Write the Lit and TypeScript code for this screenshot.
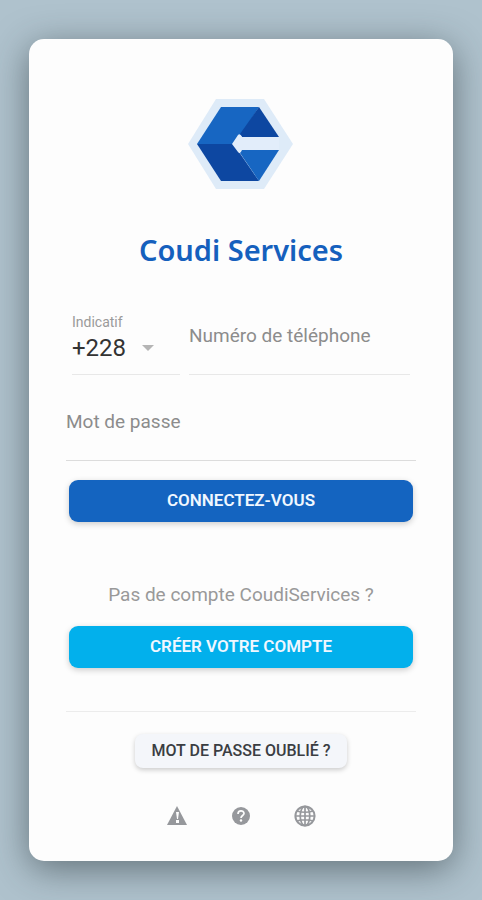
import { LitElement, html, css } from "lit";
import { customElement } from "lit/decorators.js";

@customElement("app-root")
export class AppRoot extends LitElement {
  static styles = css`
    :host {
      display: block;
      box-sizing: border-box;
      min-height: 100vh;
      padding: 39px 29px 38px;
      background: #afc2cd;
      font-family: Roboto, "Liberation Sans", sans-serif;
      overflow: hidden;
    }
    .card {
      display: flex;
      flex-direction: column;
      box-sizing: border-box;
      padding: 59px 37px 34px;
      border-radius: 15px;
      background: #fdfdfd;
      box-shadow: 0 8px 36px rgba(40, 50, 55, 0.56);
    }
    .logo {
      align-self: center;
      width: 106px;
      height: 92px;
    }
    h1 {
      margin: 42px 0 46px;
      font: 600 29px/36px "Noto Sans", "Open Sans", sans-serif;
      text-align: center;
      color: #1560bd;
    }
    form {
      display: flex;
      flex-direction: column;
    }
    input,
    select {
      display: block;
      box-sizing: border-box;
      width: 100%;
      margin: 0;
      border: 0;
      border-radius: 0;
      outline: 0;
      background: transparent;
      font-family: inherit;
      color: #333;
    }
    input {
      height: 24px;
      padding: 0;
      font-size: 19px;
      line-height: 24px;
    }
    input::placeholder {
      color: #8c8c8c;
      opacity: 1;
    }
    .row {
      display: flex;
      gap: 9px;
      margin: 0 6px;
    }
    .code {
      flex: 0 0 108px;
      box-sizing: border-box;
      border-bottom: 1px solid #e8e8e8;
    }
    .code label {
      display: block;
      font-size: 14px;
      line-height: 16px;
      color: #9a9a9a;
    }
    .pick {
      display: grid;
      grid-template-columns: 70px 12px;
      align-items: center;
      margin: 4px 0 12px;
    }
    .pick select {
      grid-area: 1 / 1 / 2 / 3;
      height: 28px;
      padding: 0;
      appearance: none;
      font-size: 24px;
      line-height: 28px;
    }
    .pick svg {
      grid-area: 1 / 2;
      width: 12px;
      height: 6px;
      pointer-events: none;
    }
    .phone {
      flex: 1;
      box-sizing: border-box;
      padding-top: 10px;
      border-bottom: 1px solid #e8e8e8;
    }
    .password {
      margin-top: 35px;
      padding-bottom: 26px;
      border-bottom: 1px solid #dcdcdc;
    }
    button {
      border: 0;
      font-family: inherit;
      cursor: pointer;
    }
    .wide {
      height: 42px;
      margin: 19px 3px 0;
      padding: 0 0 2px;
      border-radius: 9px;
      font-size: 17px;
      font-weight: 600;
      color: #f0f7ff;
      box-shadow: 0 2px 6px rgba(0, 0, 0, 0.2);
    }
    .login {
      background: #1464c0;
    }
    .create {
      background: #02b0ec;
    }
    p {
      margin: 61px 0 0;
      font-size: 19px;
      line-height: 24px;
      text-align: center;
      color: #999;
    }
    hr {
      width: 100%;
      height: 1px;
      margin: 43px 0 22px;
      border: 0;
      background: #ececec;
    }
    .forgot {
      align-self: center;
      height: 34px;
      padding: 0 16px 2px;
      border-radius: 8px;
      background: #f4f6fa;
      font-size: 16px;
      font-weight: 500;
      color: #3a3d42;
      box-shadow: 0 2px 5px rgba(0, 0, 0, 0.2);
    }
    nav {
      display: flex;
      justify-content: center;
      gap: 42px;
      margin-top: 37px;
    }
    nav a,
    nav svg {
      display: block;
      width: 22px;
      height: 22px;
    }
  `;

  render() {
    return html`
      <main class="card">
        <svg class="logo" viewBox="0 0 106 92" role="img" aria-label="Coudi Services">
          <path d="M0 46 28 1H76L105 46 76 91H28Z" fill="#deebf8" />
          <path d="M9 46 33 9H71L53 37 45 46Z" fill="#1766c2" />
          <path d="M71 9 91 39H54L52 36Z" fill="#0d47a1" />
          <path d="M9 46H45L51 54 71 83H33Z" fill="#0d47a1" />
          <path d="M52 52H91L71 83 52 55Z" fill="#1766c2" />
          <path d="M44 46 50 37Q52 35 54 39H91V52H54Q52 57 50 54Z" fill="#e2edfa" />
        </svg>
        <h1>Coudi Services</h1>
        <form @submit=${(e: Event) => e.preventDefault()}>
          <div class="row">
            <div class="code">
              <label for="code">Indicatif</label>
              <div class="pick">
                <select id="code">
                  <option>+228</option>
                </select>
                <svg viewBox="0 0 12 6" aria-hidden="true">
                  <path d="M0 0H12L6 6Z" fill="#b5b5b5" />
                </svg>
              </div>
            </div>
            <div class="phone">
              <input type="tel" placeholder="Numéro de téléphone" aria-label="Numéro de téléphone" />
            </div>
          </div>
          <div class="password">
            <input type="password" placeholder="Mot de passe" aria-label="Mot de passe" />
          </div>
          <button class="wide login" type="submit">CONNECTEZ-VOUS</button>
        </form>
        <p>Pas de compte CoudiServices ?</p>
        <button class="wide create" type="button">CRÉER VOTRE COMPTE</button>
        <hr />
        <button class="forgot" type="button">MOT DE PASSE OUBLIÉ ?</button>
        <nav>
          <a href="#alertes" aria-label="Alertes">
            <svg viewBox="0 0 22 22">
              <path d="M11 1 21 20H1Z" fill="#96989c" />
              <path d="M10 7h3l-1 7h-1zM10 15h3v3h-3z" fill="#fdfdfd" />
            </svg>
          </a>
          <a href="#aide" aria-label="Aide">
            <svg viewBox="0 0 22 22">
              <circle cx="11" cy="11" r="9" fill="#96989c" />
              <path d="M8 9C8 5 14 5 14 8.500C14 10.500 11 10.500 11 13" fill="none" stroke="#fdfdfd" stroke-width="1.700" />
              <circle cx="11" cy="15.500" r="1.200" fill="#fdfdfd" />
            </svg>
          </a>
          <a href="#langue" aria-label="Langue">
            <svg viewBox="0 0 22 22" fill="none" stroke="#96989c" stroke-width="1.700">
              <circle cx="11" cy="11" r="9.600" stroke-width="2" />
              <ellipse cx="11" cy="11" rx="4.800" ry="9.600" />
              <path d="M11 1V21M1 11H21M3 6Q11 8.500 19 6M3 16Q11 13.500 19 16" />
            </svg>
          </a>
        </nav>
      </main>
    `;
  }
}
